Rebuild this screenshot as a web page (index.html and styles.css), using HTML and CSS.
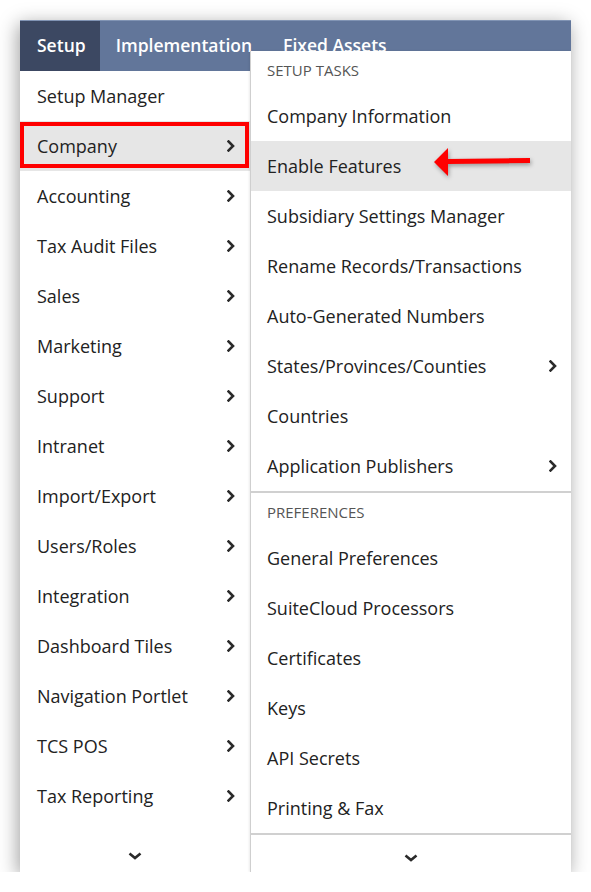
FILE: index.html
```html
<!DOCTYPE html>
<html>
<head>
<meta charset="utf-8">
<link rel="stylesheet" href="styles.css">
</head>
<body>
<div class="frame">
  <div class="topbar">
    <div class="tab active">Setup</div>
    <div class="tab">Implementation</div>
    <div class="tab">Fixed Assets</div>
  </div>
  <div class="left">
    <div class="item">Setup Manager</div>
    <div class="item sub hl">Company<svg class="chev" viewBox="0 0 8 12"><polyline points="1.5,1.5 6,6 1.5,10.5"/></svg></div>
    <div class="item sub">Accounting<svg class="chev" viewBox="0 0 8 12"><polyline points="1.5,1.5 6,6 1.5,10.5"/></svg></div>
    <div class="item sub">Tax Audit Files<svg class="chev" viewBox="0 0 8 12"><polyline points="1.5,1.5 6,6 1.5,10.5"/></svg></div>
    <div class="item sub">Sales<svg class="chev" viewBox="0 0 8 12"><polyline points="1.5,1.5 6,6 1.5,10.5"/></svg></div>
    <div class="item sub">Marketing<svg class="chev" viewBox="0 0 8 12"><polyline points="1.5,1.5 6,6 1.5,10.5"/></svg></div>
    <div class="item sub">Support<svg class="chev" viewBox="0 0 8 12"><polyline points="1.5,1.5 6,6 1.5,10.5"/></svg></div>
    <div class="item sub">Intranet<svg class="chev" viewBox="0 0 8 12"><polyline points="1.5,1.5 6,6 1.5,10.5"/></svg></div>
    <div class="item sub">Import/Export<svg class="chev" viewBox="0 0 8 12"><polyline points="1.5,1.5 6,6 1.5,10.5"/></svg></div>
    <div class="item sub">Users/Roles<svg class="chev" viewBox="0 0 8 12"><polyline points="1.5,1.5 6,6 1.5,10.5"/></svg></div>
    <div class="item sub">Integration<svg class="chev" viewBox="0 0 8 12"><polyline points="1.5,1.5 6,6 1.5,10.5"/></svg></div>
    <div class="item sub">Dashboard Tiles<svg class="chev" viewBox="0 0 8 12"><polyline points="1.5,1.5 6,6 1.5,10.5"/></svg></div>
    <div class="item sub">Navigation Portlet<svg class="chev" viewBox="0 0 8 12"><polyline points="1.5,1.5 6,6 1.5,10.5"/></svg></div>
    <div class="item sub">TCS POS<svg class="chev" viewBox="0 0 8 12"><polyline points="1.5,1.5 6,6 1.5,10.5"/></svg></div>
    <div class="item sub">Tax Reporting<svg class="chev" viewBox="0 0 8 12"><polyline points="1.5,1.5 6,6 1.5,10.5"/></svg></div>
    <div class="more"><svg class="down" viewBox="0 0 14 8"><polyline points="1.5,1.5 7,6 12.5,1.5"/></svg></div>
    <div class="redbox"></div>
  </div>
  <div class="flyout">
    <div class="section">
      <div class="head">Setup Tasks</div>
      <div class="item">Company Information</div>
      <div class="item hl">Enable Features
        <svg class="arrow" viewBox="0 0 100 32"><path d="M1 15 L15 1 L15 12 L97 11 L97 16 L15 17 L15 29 Z"/></svg>
      </div>
      <div class="item">Subsidiary Settings Manager</div>
      <div class="item">Rename Records/Transactions</div>
      <div class="item">Auto-Generated Numbers</div>
      <div class="item sub">States/Provinces/Counties<svg class="chev" viewBox="0 0 8 12"><polyline points="1.5,1.5 6,6 1.5,10.5"/></svg></div>
      <div class="item">Countries</div>
      <div class="item sub">Application Publishers<svg class="chev" viewBox="0 0 8 12"><polyline points="1.5,1.5 6,6 1.5,10.5"/></svg></div>
    </div>
    <div class="section">
      <div class="head">Preferences</div>
      <div class="item">General Preferences</div>
      <div class="item">SuiteCloud Processors</div>
      <div class="item">Certificates</div>
      <div class="item">Keys</div>
      <div class="item">API Secrets</div>
      <div class="item">Printing &amp; Fax</div>
    </div>
    <div class="more"><svg class="down" viewBox="0 0 14 8"><polyline points="1.5,1.5 7,6 12.5,1.5"/></svg></div>
  </div>
</div>
</body>
</html>
```

FILE: styles.css
```css
* { box-sizing: border-box; }
html, body { margin: 0; padding: 0; background: #fff; }
body {
  font-family: "Open Sans", "Liberation Sans", sans-serif;
  padding: 20px 20px 0 20px;
}
.frame {
  position: relative;
  width: 551px;
  height: 852px;
  background: #fff;
  box-shadow: -2px 4px 18px rgba(0,0,0,0.38);
  display: flex;
  flex-direction: column;
}
.topbar {
  height: 51px;
  background: #62769a;
  display: flex;
  border-top: 1px solid #8194b4;
}
.tab {
  color: #fff;
  font-weight: 600;
  font-size: 17.5px;
  padding: 0 15px 0 16px;
  display: flex;
  align-items: center;
  padding-bottom: 2px;
}
.tab.active { background: #3c4862; padding-left: 17px; padding-right: 14px; }
.left {
  position: relative;
  width: 230px;
  flex: 1;
  display: flex;
  flex-direction: column;
}
.item {
  position: relative;
  height: 50px;
  display: flex;
  align-items: center;
  justify-content: space-between;
  padding: 0 15px 0 17px;
  font-size: 18px;
  color: #222;
  padding-bottom: 1px;
}
.item.hl { background: #e6e6e6; }
.chev {
  width: 8px;
  height: 12px;
  fill: none;
  stroke: #2a2a2a;
  stroke-width: 2.6;
  stroke-linecap: square;
}
.more {
  flex: 1;
  display: flex;
  align-items: flex-end;
  justify-content: center;
  padding-bottom: 12px;
}
.down {
  width: 14px;
  height: 8px;
  fill: none;
  stroke: #2a2a2a;
  stroke-width: 2.6;
}
.redbox {
  position: absolute;
  left: 0;
  top: 51px;
  width: 229px;
  height: 46px;
  border: 4px solid #f00;
}
.flyout {
  position: absolute;
  left: 230px;
  top: 31px;
  right: 0;
  bottom: 0;
  background: #fff;
  border-left: 1px solid #cfcfcf;
  display: flex;
  flex-direction: column;
  box-shadow: -1px 0 2px rgba(0,0,0,0.08);
}
.flyout .item { padding-left: 16px; padding-right: 14px; }
.section { border-bottom: 2px solid #d0d0d0; }
.head {
  height: 40px;
  display: flex;
  align-items: center;
  padding-left: 16px;
  padding-bottom: 2px;
  font-size: 15px;
  color: #555;
  text-transform: uppercase;
}
.flyout .more { padding-bottom: 10px; }
.arrow {
  position: absolute;
  left: 182px;
  top: 6px;
  width: 100px;
  height: 32px;
  fill: #f00;
  filter: drop-shadow(1px 2px 2px rgba(0,0,0,0.35));
}
```
